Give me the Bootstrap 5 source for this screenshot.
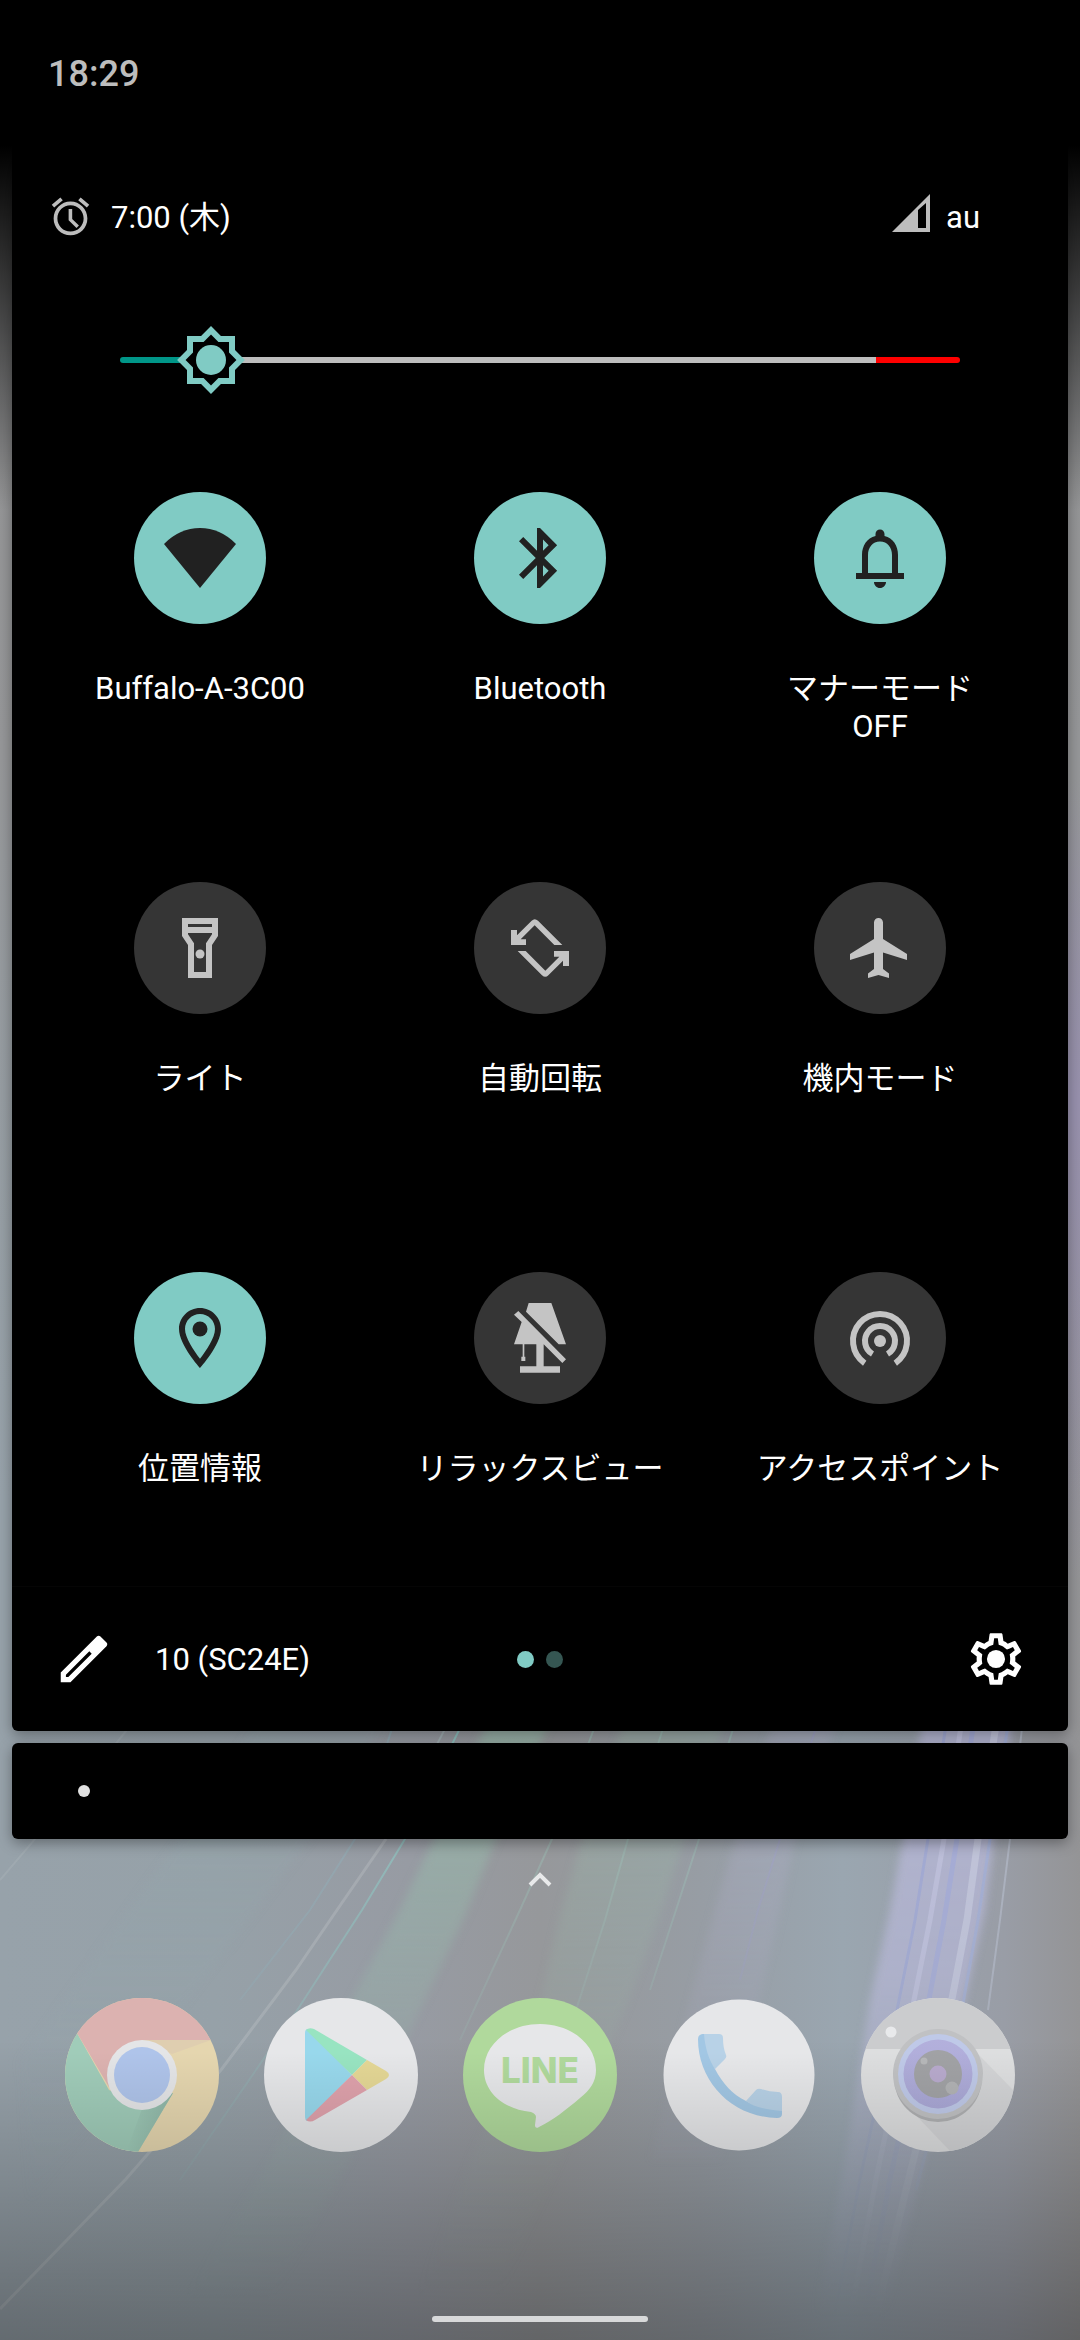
<!DOCTYPE html>
<html lang="ja">
<head>
<meta charset="utf-8">
<meta name="viewport" content="width=device-width, initial-scale=1">
<title>クイック設定</title>
<link href="https://cdn.jsdelivr.net/npm/bootstrap@5.3.0/dist/css/bootstrap.min.css" rel="stylesheet">
<style>
  body { font-family: Roboto, "Noto Sans CJK JP", sans-serif; font-size: 31px; line-height: 38px; color: #fff; background: #999da0; }
  button { color: inherit; }
  .screen { isolation: isolate; overflow: hidden; }
  .wallpaper { z-index: -1; }
  .status-bar { height: 144px; padding: 4px 48px 0; font-size: 36px; font-weight: 500; color: #bdbdbd; }
  .shade { margin: 0 12px; background: #000; border-radius: 0 0 6px 6px; box-shadow: 0 4px 14px rgba(0,0,0,.35); }
  .info-row { height: 72px; margin-top: 36px; padding: 0 88px 0 36px; }
  .info-row span { padding-top: 3px; }
  .info-row svg { color: #bdbdbd; }
  .alarm-gap { gap: 18px; }
  .carrier-gap { gap: 16px; }
  .brightness-row { height: 72px; margin: 72px 108px 0; }
  .brightness { appearance: none; width: 100%; height: 72px; margin: 0; background: transparent; }
  .brightness::-webkit-slider-runnable-track { height: 6px; border-radius: 3px;
    background: linear-gradient(90deg, #009688 11%, #bdbdbd 11%, #bdbdbd 90%, #f00 90%); }
  .brightness::-webkit-slider-thumb { appearance: none; width: 72px; height: 72px; margin-top: -33px; border: 0;
    background: url("data:image/svg+xml,%3Csvg xmlns='http://www.w3.org/2000/svg' viewBox='0 0 24 24'%3E%3Cpath d='M20 8.69V4h-4.69L12 .69 8.69 4H4v4.69L.69 12 4 15.31V20h4.69L12 23.31 15.31 20H20v-4.69L23.31 12z' fill='%2380cbc4'/%3E%3Cpath d='M18 14.48V18h-3.52L12 20.48 9.52 18H6v-3.52L3.52 12 6 9.52V6h3.52L12 3.52 14.48 6H18v3.52L20.48 12z'/%3E%3Ccircle cx='12' cy='12' r='5' fill='%2380cbc4'/%3E%3C/svg%3E") center / contain no-repeat; }
  .tiles { margin: 96px 18px 0; row-gap: 136px; }
  .tile { border: 0; padding: 0; background: none; }
  .tile-disc { width: 132px; height: 132px; background: #353535; color: #c4c4c4; margin-bottom: 46px; }
  .tile[aria-pressed=true] .tile-disc { background: #80cbc4; color: #212121; }
  .tile-name { min-height: 76px; }
  .shade-footer { display: grid; grid-template-columns: 1fr auto 1fr; align-items: center; height: 145px; margin-top: 60px; padding: 0 41px; border-top: 1px solid #050505; }
  .footer-gap { gap: 40px; }
  .footer-gap span { padding-top: 2px; }
  .pager { gap: 12px; }
  .page-dot { width: 17px; height: 17px; background: #80cbc4; }
  .page-dot.other { background: #355652; }
  .notices { height: 96px; margin-top: 12px; padding: 0 66px; border-radius: 6px; }
  .notice-dot { width: 12px; height: 12px; background: #e0e0e0; }
  .drawer { margin-top: 31px; }
  .dock { margin-top: 110px; gap: 45px; }
  .home-pill { width: 216px; height: 6px; margin: 164px auto 18px; background: #d8d9da; }
</style>
</head>
<body>
<div class="screen position-relative min-vh-100 d-flex flex-column">

  <svg class="wallpaper position-absolute top-0 start-0 w-100 h-100" viewBox="0 0 1080 2340" preserveAspectRatio="none" aria-hidden="true">
    <defs>
      <linearGradient id="base"><stop offset="0" stop-color="#97a2aa"/><stop offset=".2" stop-color="#96a1a8"/><stop offset=".38" stop-color="#979ba3"/><stop offset=".5" stop-color="#96989b"/><stop offset=".65" stop-color="#979da4"/><stop offset=".78" stop-color="#9aa6b0"/><stop offset=".93" stop-color="#999da6"/><stop offset="1" stop-color="#949496"/></linearGradient>
      <linearGradient id="upper" x2="0" y2="1"><stop offset="0" stop-color="#929292"/><stop offset=".5" stop-color="#969799"/><stop offset="1" stop-color="#969b9e" stop-opacity="0"/></linearGradient>
      <linearGradient id="violet" x2="0" y2="1"><stop offset="0" stop-color="#958cad" stop-opacity="0"/><stop offset=".4" stop-color="#9891ae"/><stop offset="1" stop-color="#958cad" stop-opacity="0"/></linearGradient>
      <linearGradient id="topfade" x2="0" y2="1"><stop offset="0" stop-color="#000"/><stop offset=".28" stop-color="#000"/><stop offset="1" stop-color="#000" stop-opacity="0"/></linearGradient>
      <linearGradient id="lowfade" x2="0" y2="1"><stop offset="0" stop-color="#000" stop-opacity="0"/><stop offset=".42" stop-color="#000" stop-opacity=".14"/><stop offset="1" stop-color="#000" stop-opacity=".34"/></linearGradient>
      <linearGradient id="rayfade" gradientUnits="userSpaceOnUse" x1="0" y1="1700" x2="0" y2="2300"><stop offset="0" stop-color="#fff"/><stop offset=".3" stop-color="#aaa"/><stop offset=".6" stop-color="#444"/><stop offset="1" stop-color="#000"/></linearGradient>
      <linearGradient id="bluefade" gradientUnits="userSpaceOnUse" x1="0" y1="1700" x2="0" y2="2320"><stop offset="0" stop-color="#fff"/><stop offset=".45" stop-color="#ccc"/><stop offset=".7" stop-color="#555"/><stop offset="1" stop-color="#000"/></linearGradient>
      <mask id="m1" maskUnits="userSpaceOnUse" x="0" y="1600" width="1080" height="740"><rect y="1600" width="1080" height="740" fill="url(#rayfade)"/></mask>
      <mask id="m2" maskUnits="userSpaceOnUse" x="0" y="1600" width="1080" height="740"><rect y="1600" width="1080" height="740" fill="url(#bluefade)"/></mask>
      <filter id="soft" x="-10%" y="-10%" width="120%" height="120%"><feGaussianBlur stdDeviation="4"/></filter>
    </defs>
    <rect width="1080" height="2340" fill="url(#base)"/>
    <rect width="1080" height="1500" fill="url(#upper)"/>
    <rect x="1060" y="780" width="20" height="800" fill="url(#violet)"/>
    <g mask="url(#m1)">
      <g filter="url(#soft)">
        <path d="M498 1700 560 1700 496 1839 465 1915 425 2000 350 2160 250 2340 160 2340 270 2160 355 1993 400 1910 434 1839Z" fill="#98c0ae" opacity=".6"/>
        <path d="M632 1700 732 1700 684 1839 660 1915 625 2010 560 2160 480 2340 400 2340 470 2160 540 2000 562 1910 582 1839Z" fill="#9cb5a9" opacity=".45"/>
        <path d="M780 1700 845 1700 795 1839 780 1910 755 2020 720 2160 650 2160 690 2000 715 1910 735 1839Z" fill="#b5b1cd" opacity=".35"/>
        <path d="M270 1700 400 1700 310 1839 150 2050 30 2200 20 2060 180 1839Z" fill="#95adaf" opacity=".25"/>
      </g>
      <g fill="none" stroke-width="2">
        <path d="M474 1700 405 1839 362 1910 296 2012 180 2180" stroke="#8fc3c0"/>
        <path d="M460 1700 392 1831" stroke="#b0c8c8" opacity=".5"/>
        <path d="M395 1720 355 1839 310 1910 240 2000" stroke="#8db8c4" opacity=".45"/>
        <path d="M605 1700 552 1839 520 1910 460 2040 M672 1700 628 1839 605 1920 560 2060 M742 1700 699 1839 676 1910 650 1990" stroke="#9ec7bb" opacity=".5"/>
        <path d="M825 1700 780 1839 758 1910 740 1980" stroke="#a29fcf" opacity=".5"/>
      </g>
    </g>
    <path d="M135 1720 105 1757 0 1880" stroke="#b7bec3" stroke-width="2" fill="none" opacity=".25"/>
    <path d="M386 1839 337 1910 296 1970 221 2070 126 2179 0 2309" stroke="#c3c8c9" stroke-width="3" fill="none" opacity=".32"/>
    <g mask="url(#m2)">
      <path d="M926 1700 1016 1700 994 1839 985 1910 965 2000 920 2179 880 2340 810 2340 842 2179 870 2000 890 1910 903 1839Z" fill="#b7b8d7" opacity=".85" filter="url(#soft)"/>
      <g fill="none" stroke-width="3" opacity=".8">
        <path d="M950 1700 928 1839 915 1920 897 2010 860 2179 830 2340" stroke="#9fa8d8"/>
        <path d="M965 1700 944 1839 930 1920 912 2010 876 2179 846 2340" stroke="#c4c5e2" stroke-width="5"/>
        <path d="M977 1700 957 1839 944 1920 927 2010 890 2179 860 2340" stroke="#a4acdc" stroke-width="5"/>
        <path d="M1000 1700 978 1839 967 1920 948 2020 906 2190 870 2340" stroke="#c9cce2" stroke-width="7"/>
        <path d="M1012 1700 990 1839 978 1920 960 2020 916 2190" stroke="#a3b0da"/>
        <path d="M1025 1700 1010 1839 1000 1920 988 2010" stroke="#b3bac8" stroke-width="2"/>
      </g>
    </g>
    <rect width="1080" height="510" fill="url(#topfade)"/>
    <rect y="2040" width="1080" height="300" fill="url(#lowfade)"/>
  </svg>

  <header class="status-bar d-flex align-items-center">
    <time>18:29</time>
  </header>

  <main class="shade">
    <div class="info-row d-flex align-items-center justify-content-between">
      <div class="d-flex align-items-center alarm-gap">
        <svg width="45" height="45" viewBox="0 0 24 24" fill="currentColor" aria-hidden="true"><path d="M22 5.72l-4.6-3.86-1.29 1.53 4.6 3.86L22 5.72zM7.88 3.39L6.6 1.86 2 5.71l1.29 1.53 4.59-3.85zM12.9 8H11v6l4.2 4.1 1.3-1.3-3.6-3.500V8zM12 4c-4.97 0-9 4.030-9 9s4.020 9 9 9c4.970 0 9-4.030 9-9s-4.030-9-9-9zm0 16c-3.870 0-7-3.130-7-7s3.130-7 7-7 7 3.130 7 7-3.130 7-7 7z"/></svg>
        <span>7:00 (木)</span>
      </div>
      <div class="d-flex align-items-center carrier-gap">
        <svg width="38" height="44" viewBox="0 0 38 44" aria-hidden="true"><path d="M0 38 38 0V38ZM26 16V34H34V9Z" fill="currentColor" fill-rule="evenodd"/></svg>
        <span>au</span>
      </div>
    </div>

    <div class="brightness-row">
      <input class="brightness d-block" type="range" min="0" max="1000" value="72" aria-label="明るさ">
    </div>

    <div class="tiles row row-cols-3 gx-0">
      <div class="col"><button class="tile w-100 d-flex flex-column align-items-center" type="button" aria-pressed="true">
        <span class="tile-disc rounded-circle d-flex align-items-center justify-content-center"><svg width="72" height="72" viewBox="0 0 24 24" fill="currentColor"><path d="M12 22 0 7.3Q5.3 2 12 2T24 7.3Z"/></svg></span>
        <span class="tile-name">Buffalo-A-3C00</span></button></div>
      <div class="col"><button class="tile w-100 d-flex flex-column align-items-center" type="button" aria-pressed="true">
        <span class="tile-disc rounded-circle d-flex align-items-center justify-content-center"><svg width="72" height="72" viewBox="0 0 24 24" fill="currentColor"><path d="M17.71 7.71L12 2h-1v7.59L6.41 5 5 6.41 10.59 12 5 17.59 6.41 19 11 14.41V22h1l5.71-5.71-4.3-4.29 4.3-4.29zM13 5.83l1.88 1.88L13 9.59V5.83zm1.88 10.46L13 18.17v-3.76l1.88 1.88z"/></svg></span>
        <span class="tile-name">Bluetooth</span></button></div>
      <div class="col"><button class="tile w-100 d-flex flex-column align-items-center" type="button" aria-pressed="true">
        <span class="tile-disc rounded-circle d-flex align-items-center justify-content-center"><svg width="72" height="72" viewBox="0 0 24 24" fill="currentColor"><path d="M18 17v-6c0-3.07-1.63-5.64-4.5-6.32V4c0-.83-.67-1.5-1.5-1.5s-1.5.67-1.5 1.5v.68C7.64 5.36 6 7.92 6 11v6H4v2h16v-2zm-2 0H8v-6c0-2.48 1.51-4.5 4-4.5s4 2.02 4 4.5zM12 22c1.1 0 2-.9 2-2h-4c0 1.1.9 2 2 2z"/></svg></span>
        <span class="tile-name">マナーモード<br>OFF</span></button></div>

      <div class="col"><button class="tile w-100 d-flex flex-column align-items-center" type="button" aria-pressed="false">
        <span class="tile-disc rounded-circle d-flex align-items-center justify-content-center"><svg width="72" height="72" viewBox="0 0 24 24" fill="currentColor"><path d="M6 2v6l2 3v11h8V11l2-3V2H6zm10 2v1H8V4h8zm-2 6.4V20h-4v-9.6L8 7.4V7h8v.4l-2 3z"/><circle cx="12" cy="14" r="1.5"/></svg></span>
        <span class="tile-name">ライト</span></button></div>
      <div class="col"><button class="tile w-100 d-flex flex-column align-items-center" type="button" aria-pressed="false">
        <span class="tile-disc rounded-circle d-flex align-items-center justify-content-center"><svg width="72" height="72" viewBox="12 6 216 216" fill="currentColor"><path id="turn" d="M33 60H51V76L95 32Q104 23 114 32L187 105H163L104 46 62 88H78V105H33Z"/><use href="#turn" transform="rotate(180 120 114)"/></svg></span>
        <span class="tile-name">自動回転</span></button></div>
      <div class="col"><button class="tile w-100 d-flex flex-column align-items-center" type="button" aria-pressed="false">
        <span class="tile-disc rounded-circle d-flex align-items-center justify-content-center"><svg width="72" height="72" viewBox="0 0 24 24" fill="currentColor"><path d="M21 16v-2l-8-5V3.5c0-.83-.67-1.5-1.5-1.5S10 2.67 10 3.5V9l-8 5v2l8-2.5V19l-2 1.5V22l3.5-1 3.5 1v-1.5L13 19v-5.5l8 2.5z"/></svg></span>
        <span class="tile-name">機内モード</span></button></div>

      <div class="col"><button class="tile w-100 d-flex flex-column align-items-center" type="button" aria-pressed="true">
        <span class="tile-disc rounded-circle d-flex align-items-center justify-content-center"><svg width="72" height="72" viewBox="0 0 24 24" fill="currentColor"><path d="M12 2C8.13 2 5 5.13 5 9c0 5.25 7 13 7 13s7-7.75 7-13c0-3.87-3.13-7-7-7zM7 9c0-2.76 2.24-5 5-5s5 2.24 5 5c0 2.88-2.88 7.19-5 9.88C9.92 16.21 7 11.85 7 9z"/><circle cx="12" cy="9" r="2.5"/></svg></span>
        <span class="tile-name">位置情報</span></button></div>
      <div class="col"><button class="tile w-100 d-flex flex-column align-items-center" type="button" aria-pressed="false">
        <span class="tile-disc rounded-circle d-flex align-items-center justify-content-center"><svg width="72" height="72" viewBox="12 36 216 216" fill="currentColor"><path d="M86 39H154L198 163H176L78 65ZM55 63 198 208 187 219 131 163V229H180V248H60V229H109V163H73V200H76V213H64V200H68V163H42L65 96 42 74Z"/></svg></span>
        <span class="tile-name">リラックスビュー</span></button></div>
      <div class="col"><button class="tile w-100 d-flex flex-column align-items-center" type="button" aria-pressed="false">
        <span class="tile-disc rounded-circle d-flex align-items-center justify-content-center"><svg width="72" height="72" viewBox="0 0 24 24" fill="none" stroke="currentColor" stroke-width="2"><path d="M6.9 20.4a9 9 0 1 1 10.2 0M9.5 17.33a5 5 0 1 1 5 0"/><circle cx="12" cy="13" r="2" fill="currentColor" stroke="none"/></svg></span>
        <span class="tile-name">アクセスポイント</span></button></div>
    </div>

    <footer class="shade-footer">
      <div class="d-flex align-items-center footer-gap">
        <button class="tile" type="button" aria-label="編集"><svg class="d-block" width="62" height="62" viewBox="0 0 24 24" fill="currentColor"><path d="M14.06 9.02l.92.92L5.92 19H5v-.92l9.06-9.06M17.66 3c-.25 0-.51.1-.7.29l-1.83 1.83L3 17.25V21h3.75L20.71 7.04c.39-.39.39-1.02 0-1.41l-2.34-2.34c-.2-.2-.45-.29-.71-.29z"/></svg></button>
        <span>10 (SC24E)</span>
      </div>
      <div class="pager d-flex"><span class="page-dot rounded-circle"></span><span class="page-dot other rounded-circle"></span></div>
      <button class="tile ms-auto" type="button" aria-label="設定"><svg class="d-block" width="62" height="62" viewBox="0 0 24 24" fill="currentColor"><path d="M19.43 12.98c.04-.32.07-.64.07-.98 0-.34-.03-.66-.07-.98l2.11-1.65c.19-.15.24-.42.12-.64l-2-3.46c-.09-.16-.26-.25-.44-.25-.06 0-.12.01-.17.03l-2.49 1c-.52-.4-1.08-.73-1.69-.98l-.38-2.65C14.46 2.18 14.25 2 14 2h-4c-.25 0-.46.18-.49.42l-.38 2.65c-.61.25-1.17.59-1.69.98l-2.49-1c-.06-.02-.12-.03-.18-.03-.17 0-.34.09-.43.25l-2 3.46c-.13.22-.07.49.12.64l2.11 1.65c-.04.32-.07.65-.07.98 0 .33.03.66.07.98l-2.11 1.65c-.19.15-.24.42-.12.64l2 3.46c.09.16.26.25.44.25.06 0 .12-.01.17-.03l2.49-1c.52.4 1.08.73 1.69.98l.38 2.65c.03.24.24.42.49.42h4c.25 0 .46-.18.49-.42l.38-2.65c.61-.25 1.17-.59 1.69-.98l2.49 1c.06.02.12.03.18.03.17 0 .34-.09.43-.25l2-3.46c.12-.22.07-.49-.12-.64l-2.11-1.65zm-1.98-1.71c.04.31.05.52.05.73 0 .21-.02.43-.05.73l-.14 1.13.89.7 1.08.84-.7 1.21-1.27-.51-1.04-.42-.9.68c-.43.32-.84.56-1.25.73l-1.06.43-.16 1.13-.2 1.35h-1.4l-.19-1.35-.16-1.13-1.06-.43c-.43-.18-.83-.41-1.23-.71l-.91-.7-1.06.43-1.27.51-.7-1.21 1.08-.84.89-.7-.14-1.13c-.03-.31-.05-.54-.05-.74s.02-.43.05-.73l.14-1.13-.89-.7-1.08-.84.7-1.21 1.27.51 1.04.42.9-.68c.43-.32.84-.56 1.25-.73l1.06-.43.16-1.13.2-1.35h1.39l.19 1.35.16 1.13 1.06.43c.43.18.83.41 1.23.71l.91.7 1.06-.43 1.27-.51.7 1.21-1.07.85-.89.7.14 1.13z"/><circle cx="12" cy="12" r="3.5"/></svg></button>
    </footer>
  </main>

  <section class="shade notices d-flex align-items-center" aria-label="通知"><span class="notice-dot rounded-circle"></span></section>

  <div class="drawer"><svg class="d-block mx-auto" width="24" height="18" viewBox="0 0 24 18" fill="none" stroke="#e8e9ea" stroke-width="4" aria-hidden="true"><path d="M2 15 12 5 22 15"/></svg></div>

  <nav class="dock d-flex justify-content-center" aria-label="アプリ">
    <svg width="0" height="0" class="position-absolute" aria-hidden="true"><defs>
      <clipPath id="disc"><circle cx="77" cy="77" r="77"/></clipPath>
      <linearGradient id="dim" x2="0" y2="1"><stop offset=".35" stop-opacity="0"/><stop offset="1" stop-opacity=".12"/></linearGradient>
      <linearGradient id="lens" x2="0" y2="1"><stop stop-color="#b3b0dc"/><stop offset="1" stop-color="#aaa8d6"/></linearGradient>
      <linearGradient id="fold"><stop stop-color="#8fb5a6" stop-opacity="0"/><stop offset="1" stop-color="#8fb5a6"/></linearGradient>
    </defs></svg>
    <button class="tile" type="button" aria-label="Chrome"><svg class="d-block" width="154" height="154"><g clip-path="url(#disc)">
      <rect width="154" height="154" fill="#e5d6af"/><path d="M77 42H146L107 56Z" fill="#dfceb0"/>
      <path d="M0 0 12 35 44 92 77 105 108 95 73 154H0Z" fill="#a0ccb9"/>
      <path d="M108 95 73 154 62 152 78 108Z" fill="url(#fold)"/>
      <path d="M12 35 44 89 60 77 77 42H154V0H0Z" fill="#dcb2b0"/>
      <circle cx="77" cy="77" r="35" fill="#e4e5e7"/><circle cx="77" cy="77" r="28" fill="#afc4ea"/></g><circle cx="77" cy="77" r="77" fill="url(#dim)"/></svg></button>
    <button class="tile" type="button" aria-label="Play ストア"><svg class="d-block" width="154" height="154"><circle cx="77" cy="77" r="77" fill="#e6e7e9"/>
      <path d="M41 35Q41 31 44 31L88 77 43 123Q41 122 41 119Z" fill="#98d8ec"/><path d="M42 32Q45 29 50 31L103 62 88 77Z" fill="#98e4c1"/><path d="M103 62 122 73Q128 77 122 81L103 92 88 77Z" fill="#e4d795"/><path d="M42 122 88 77 103 92 51 122Q46 125 42 122Z" fill="#dfa2ac"/><circle cx="77" cy="77" r="77" fill="url(#dim)"/></svg></button>
    <button class="tile" type="button" aria-label="LINE"><svg class="d-block" width="154" height="154"><circle cx="77" cy="77" r="77" fill="#b0d99c"/>
      <path d="M77 26C108 26 133 46 133 72 133 84 127 92 117 100 103 112 90 122 76 129 73 131 72 129 72 127L73 119Q73 116 68 114C40 111 21 94 21 72 21 46 46 26 77 26Z" fill="#e6e7e9"/>
      <text x="77" y="85" text-anchor="middle" font-family="Inter, sans-serif" font-size="35" font-weight="800" fill="#b0d99c">LINE</text><circle cx="77" cy="77" r="77" fill="url(#dim)"/></svg></button>
    <button class="tile" type="button" aria-label="電話"><svg class="d-block" width="154" height="154"><circle cx="77" cy="77" r="75.5" fill="#e6e7e9"/>
      <path d="M40 36H57Q61 36 61 40 61 50 64 57 65 59 63 61L53 71 44 60ZM84 103 94 92Q96 90 99 91 107 94 116 94 120 94 120 99V116L105 116Z" fill="#b8d2e7"/>
      <path d="M36 41Q36 36 42 36C43 50 47 62 53 71 61 86 70 96 84 103 94 110 106 112 120 113V116Q120 120 115 120C70 119 36 84 36 41Z" fill="#a2c7e4"/><circle cx="77" cy="77" r="75.5" fill="url(#dim)"/></svg></button>
    <button class="tile" type="button" aria-label="カメラ"><svg class="d-block" width="154" height="154"><g clip-path="url(#disc)"><rect width="154" height="154" fill="#dddedf"/><rect width="154" height="51" fill="#cbccce"/>
      <path d="M116 55 154 94V154H90L48 110Z" fill="#cfd0d1" opacity=".7"/></g><circle cx="77" cy="80" r="44" fill="#afb0b2"/><circle cx="77" cy="76" r="45" fill="#c0c1c3"/><circle cx="77" cy="76" r="40" fill="#bfc9e8"/><circle cx="77" cy="76" r="34.5" fill="url(#lens)"/><circle cx="77" cy="76" r="24" fill="#a1a2a5"/><circle cx="77" cy="76" r="8.5" fill="#b8aacd"/><circle cx="63" cy="63" r="3.5" fill="#b6b7b9"/><circle cx="91" cy="90" r="6.5" fill="#b2b3b5"/><circle cx="30" cy="34" r="5.5" fill="#e8e9eb"/><circle cx="77" cy="77" r="77" fill="url(#dim)"/></svg></button>
  </nav>

  <div class="home-pill rounded-pill"></div>
</div>
<script src="https://cdn.jsdelivr.net/npm/bootstrap@5.3.0/dist/js/bootstrap.bundle.min.js"></script>
</body>
</html>
